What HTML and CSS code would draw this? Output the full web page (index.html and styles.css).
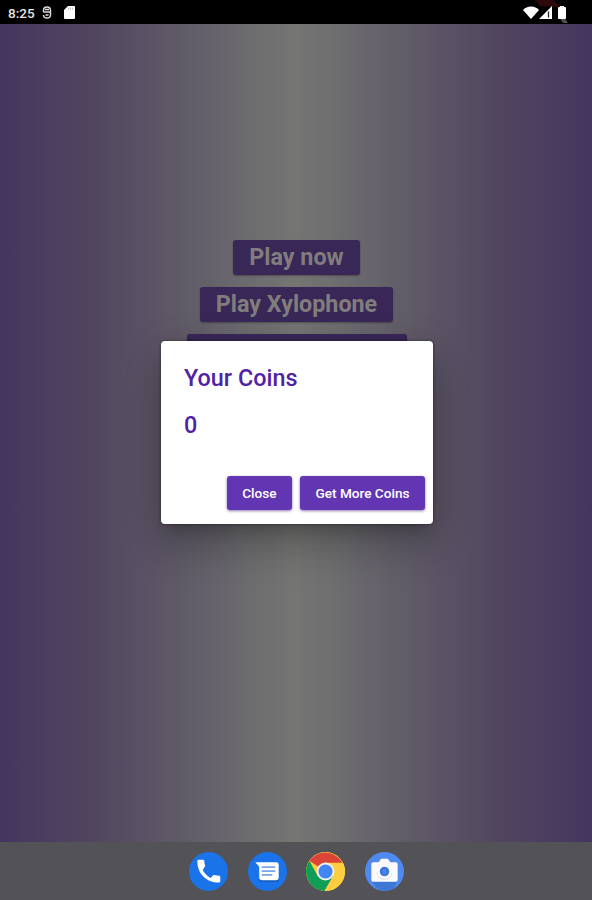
FILE: index.html
```html
<!DOCTYPE html>
<html lang="en">
	<head>
		<meta charset="UTF-8" />
		<meta name="viewport" content="width=device-width, initial-scale=1.0" />
		<title>Your Coins</title>
		<link rel="stylesheet" href="styles.css">
	</head>
	<body>
		<header class="status-bar">
			<svg class="debug-banner" width="50" height="24" viewBox="0 0 50 24">
				<path d="M0 0h18l8 7h-7L5 6z" fill="#2c090b" />
				<path d="M24 17h5l4 6h-5z" fill="#544a4a" />
			</svg>
			<span class="time">8:25</span>
			<svg class="icon-debug" width="10" height="13" viewBox="0 0 10 13" fill="none" stroke="#ddd" stroke-width="1.4">
				<path d="M1.500 6V4.500Q1.500 1 5 1t3.500 3.500V9Q8.500 12 5 12T1.500 9M1.500 6h7M3.500 9h3M3 3.500h4" />
			</svg>
			<svg class="icon-sd" width="11" height="13" viewBox="0 0 11 13">
				<path d="M4 0h6q1 0 1 1v11q0 1-1 1H1q-1 0-1-1V4z" fill="#fff" />
				<path d="M4.500 1.500v2M6.500 1.500v2M8.500 1.500v2" stroke="#999" stroke-width=".7" />
			</svg>
			<div class="status-right">
				<svg width="16" height="13" viewBox="0 0 16 13"><path d="M0 4Q3 .5 8 .5T16 4l-8 9z" fill="#fff" /></svg>
				<svg width="13" height="13" viewBox="0 0 13 13">
					<path d="M0 13L13 0v13z" fill="#fff" />
					<path d="M9.500 5.500v6" stroke="#222" stroke-width="1.300" />
				</svg>
				<svg class="icon-battery" width="8" height="13" viewBox="0 0 8 13"><path d="M2 0h4v1h1q1 0 1 1V12q0 1-1 1H1q-1 0-1-1V2q0-1 1-1h1z" fill="#fff" /></svg>
			</div>
		</header>
		<main class="screen">
			<div class="menu">
				<button class="menu-btn">Play now</button>
				<button class="menu-btn">Play Xylophone</button>
				<button class="menu-btn menu-btn-wide"></button>
			</div>
			<div class="dialog">
				<h2 class="dialog-title">Your Coins</h2>
				<p class="dialog-value">0</p>
				<div class="dialog-actions">
					<button class="dialog-btn">Close</button>
					<button class="dialog-btn">Get More Coins</button>
				</div>
			</div>
		</main>
		<footer class="dock">
			<svg class="dock-icon" viewBox="0 0 40 40">
				<circle cx="20" cy="20" r="20" fill="#1a73e8" />
				<path transform="translate(-1 -1.500) scale(1.060)" d="M14.200 18.800c1.700 3.300 4.400 6 7.700 7.700l2.500-2.500c.4-.4.9-.5 1.300-.3 1.300.5 2.700.7 4.200.7.700 0 1.300.6 1.300 1.300v4c0 .8-.6 1.300-1.300 1.300C17.800 31 9 22.200 9 10.300 9 9.600 9.600 9 10.300 9h4.200c.7 0 1.300.6 1.300 1.300 0 1.500.2 2.900.7 4.200.1.500 0 1-.3 1.300z" fill="#fff" />
			</svg>
			<svg class="dock-icon" viewBox="0 0 40 40">
				<circle cx="20" cy="20" r="20" fill="#1a73e8" />
				<path d="M11.500 28h20v.5q0 2-2 2h-16q-2 0-2-2z" fill="#1558b5" />
				<path d="M7.500 10.500h21.500q2.500 0 2.500 2.500V26.500q0 2.500-2.500 2.500H14q-2.500 0-2.500-2.500V15z" fill="#fff" />
				<path d="M14 15.500h14M14 19.500h14M14 23.500h11" stroke="#7ba4ec" stroke-width="1.800" />
			</svg>
			<svg class="dock-icon" viewBox="0 0 40 40">
				<circle cx="20" cy="20" r="20" fill="#ffcd40" />
				<path d="M20 20L37.300 11A20 20 0 0 0 3.500 9z" fill="#db4437" />
				<path d="M3.500 9A20 20 0 0 0 19 40L28 24.500 20 20 12 24.500z" fill="#0f9d58" />
				<path d="M20 11h17.900A20 20 0 0 1 19 40l8.800-15.500z" fill="#ffcd40" />
				<circle cx="20" cy="20" r="9.200" fill="#f1f1f1" />
				<circle cx="20" cy="20" r="7.200" fill="#4285f4" />
			</svg>
			<svg class="dock-icon" viewBox="0 0 40 40">
				<circle cx="20" cy="20" r="20" fill="#4f8af0" />
				<path d="M8 30h25l-3 7q-10 6-19-1l-3-5z" fill="#3f78d4" />
				<path d="M8.500 10.500H14l2.500-3.500h7l2.500 3.500h5.500q2 0 2 2v16q0 2-2 2h-23q-2 0-2-2v-16q0-2 2-2z" fill="#fafafa" />
				<circle cx="20" cy="20.800" r="8" fill="#dfe3ea" />
				<circle cx="20" cy="20" r="7.500" fill="#fff" />
				<circle cx="20" cy="20" r="4.900" fill="#3f77dc" />
				<circle cx="20" cy="20" r="2" fill="#5088ea" />
			</svg>
		</footer>
	</body>
</html>
```

FILE: styles.css
```css
* {
	box-sizing: border-box;
}
body {
	margin: 0;
	height: 900px;
	display: flex;
	flex-direction: column;
	font-family: Roboto, Arial, sans-serif;
	overflow: hidden;
}
button {
	border: 0;
	font-family: inherit;
	white-space: nowrap;
}
.status-bar {
	position: relative;
	height: 24px;
	padding: 0 26px 0 8px;
	display: flex;
	align-items: center;
	background-color: #000;
	color: #e6e6e6;
}
.debug-banner {
	position: absolute;
	top: 0;
	right: 7px;
}
.time {
	width: 27px;
	font-size: 13.5px;
	font-weight: 500;
	padding-top: 1px;
}
.icon-debug {
	margin-left: 7px;
}
.icon-sd {
	margin-left: 12px;
}
.status-right {
	position: relative;
	margin-left: auto;
	display: flex;
}
.icon-battery {
	margin-left: 6px;
}
.screen {
	position: relative;
	height: 818px;
	background: linear-gradient(to right, #44355f 0%, #514660 16%, #5c5565 27%, #6b6a6e 41%, #757573 50%, #6b6a6e 59%, #5c5565 73%, #514660 84%, #44355f 100%);
}
.menu {
	padding: 216px 0 0 1px;
	display: flex;
	flex-direction: column;
	align-items: center;
	gap: 12px;
}
.menu-btn {
	height: 35px;
	padding: 0 16px;
	border-radius: 3px;
	background-color: #392758;
	color: #817d7c;
	font-size: 23.3px;
	font-weight: 700;
	line-height: 35px;
	box-shadow: 0 1px 2px rgba(0, 0, 0, 0.3);
}
.menu-btn-wide {
	width: 220px;
}
/* dialog lies over the dimmed menu */
.dialog {
	position: absolute;
	top: 317.4px;
	left: 160.6px;
	width: 272.4px;
	height: 183px;
	padding: 24px 8px 14px 23.4px;
	display: flex;
	flex-direction: column;
	background-color: #fff;
	border-radius: 4px;
	box-shadow: 0 11px 15px -7px rgba(0, 0, 0, 0.2), 0 24px 38px 3px rgba(0, 0, 0, 0.14), 0 9px 36px 4px rgba(0, 0, 0, 0.12), 0 0 3px rgba(0, 0, 0, 0.5);
}
.dialog-title,
.dialog-value {
	margin: 0;
	color: #5122a6;
	font-size: 23.4px;
	font-weight: 500;
	line-height: 27px;
}
.dialog-value {
	margin-top: 20px;
}
.dialog-actions {
	margin-top: auto;
	display: flex;
	justify-content: flex-end;
	gap: 8px;
}
.dialog-btn {
	height: 34.5px;
	padding: 0 15.5px;
	border-radius: 3px;
	background-color: #6236b3;
	color: #fff;
	font-size: 13.6px;
	font-weight: 500;
	box-shadow: 0 1px 3px rgba(60, 30, 120, 0.6);
}
.dock {
	height: 58px;
	padding-left: 1px;
	display: flex;
	align-items: center;
	justify-content: center;
	gap: 19.5px;
	background-color: #535256;
}
.dock-icon {
	width: 39px;
	height: 39px;
}
```
